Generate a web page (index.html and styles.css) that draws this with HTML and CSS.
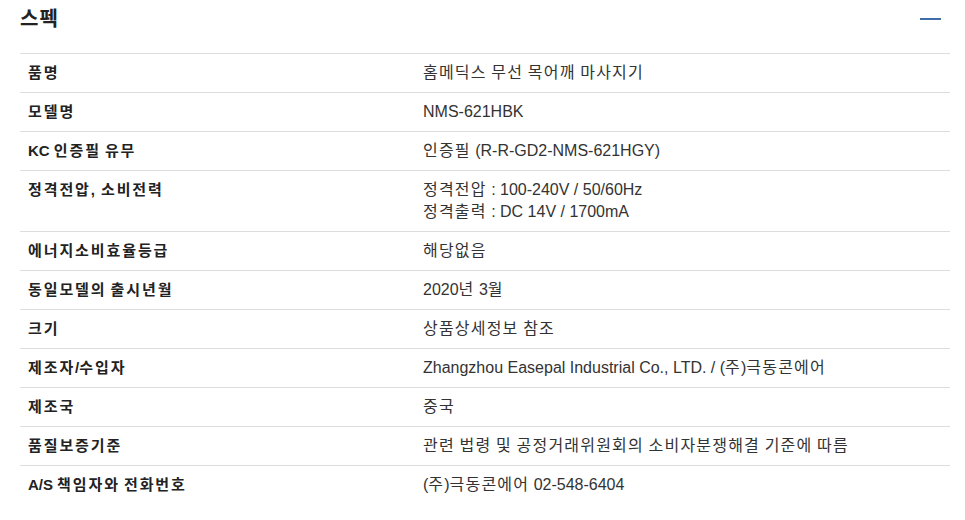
FILE: index.html
```html
<!DOCTYPE html>
<html lang="ko">
<head>
<meta charset="utf-8">
<link rel="stylesheet" href="styles.css">
</head>
<body>
<section class="spec">
  <div class="spec-head">
    <h2 class="spec-title">스펙</h2>
    <span class="toggle" aria-label="접기"></span>
  </div>
  <table class="spec-table">
    <tr><th>품명</th><td><span class="hg">홈메딕스 무선 목어깨 마사지기</span></td></tr>
    <tr><th>모델명</th><td>NMS-621HBK</td></tr>
    <tr><th><span class="lat">KC</span> 인증필 유무</th><td><span class="hg">인증필</span> (R-R-GD2-NMS-621HGY)</td></tr>
    <tr><th>정격전압, 소비전력</th><td><span class="hg">정격전압</span> : 100-240V / 50/60Hz<br><span class="hg">정격출력</span> : DC 14V / 1700mA</td></tr>
    <tr><th>에너지소비효율등급</th><td><span class="hg">해당없음</span></td></tr>
    <tr><th>동일모델의 출시년월</th><td>2020<span class="hg">년</span> 3<span class="hg">월</span></td></tr>
    <tr><th>크기</th><td><span class="hg">상품상세정보 참조</span></td></tr>
    <tr><th>제조자<span class="lat">/</span>수입자</th><td>Zhangzhou Easepal Industrial Co., LTD. / (<span class="hg">주</span>)<span class="hg">극동콘에어</span></td></tr>
    <tr><th>제조국</th><td><span class="hg">중국</span></td></tr>
    <tr><th>품질보증기준</th><td><span class="hg">관련 법령 및 공정거래위원회의 소비자분쟁해결 기준에 따름</span></td></tr>
    <tr><th><span class="lat">A/S</span> 책임자와 전화번호</th><td>(<span class="hg">주</span>)<span class="hg">극동콘에어</span> 02-548-6404</td></tr>
  </table>
</section>
</body>
</html>
```

FILE: styles.css
```css
html, body {
  margin: 0;
  padding: 0;
  background: #fff;
}
body {
  font-family: "Liberation Sans", Arial, "Noto Sans CJK KR", sans-serif;
  color: #333;
}
.spec {
  padding: 0 15px 0 20px;
}
.spec-head {
  display: flex;
  justify-content: space-between;
  align-items: center;
  height: 38px;
  padding-right: 9px;
  margin-bottom: 15px;
}
.spec-title {
  margin: 0;
  font-size: 20px;
  font-weight: bold;
  color: #222;
  line-height: 36px;
  letter-spacing: 1px;
}
.toggle {
  display: block;
  width: 21px;
  height: 2px;
  background: #3f6ea8;
}
.spec-table {
  width: 100%;
  border-collapse: collapse;
}
.spec-table tr {
  border-top: 1px solid #ddd;
}
.spec-table th,
.spec-table td {
  text-align: left;
  vertical-align: top;
  padding: 8px 8px;
  line-height: 22px;
}
.spec-table th {
  width: 379px;
  font-size: 15px;
  font-weight: bold;
  color: #222;
  letter-spacing: 1.9px;
  word-spacing: -2px;
}
.spec-table th .lat {
  letter-spacing: 0;
}
.spec-table td {
  font-size: 16px;
  color: #333;
}
.hg {
  letter-spacing: 1.2px;
  word-spacing: -1px;
}
```
